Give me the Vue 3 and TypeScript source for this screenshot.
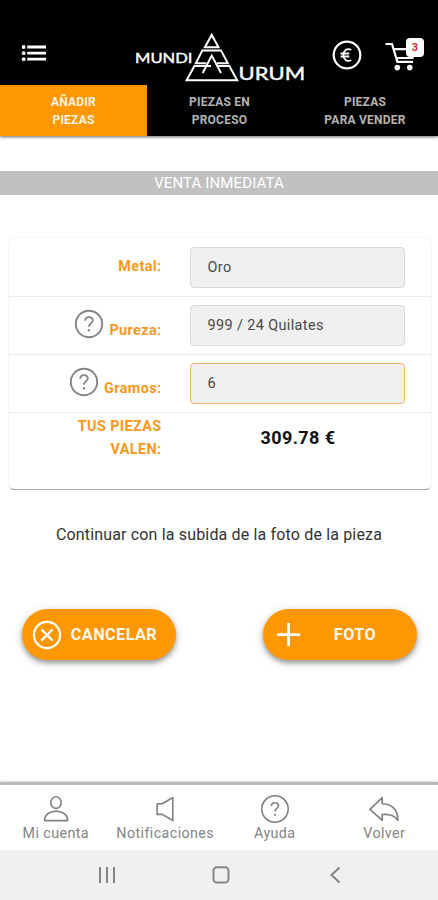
<script setup lang="ts">
import { ref } from 'vue'

interface Tab {
  id: string
  lines: string[]
}

interface Field {
  label: string
  value: string
  help: boolean
  focused: boolean
}

const tabs: Tab[] = [
  { id: 'add', lines: ['AÑADIR', 'PIEZAS'] },
  { id: 'process', lines: ['PIEZAS EN', 'PROCESO'] },
  { id: 'sell', lines: ['PIEZAS', 'PARA VENDER'] },
]
const activeTab = ref('add')

const fields: Field[] = [
  { label: 'Metal:', value: 'Oro', help: false, focused: false },
  { label: 'Pureza:', value: '999 / 24 Quilates', help: true, focused: false },
  { label: 'Gramos:', value: '6', help: true, focused: true },
]

const cartCount = ref(3)
</script>

<template>
  <div class="app">
    <header class="header">
      <svg class="menu" width="26" height="20" viewBox="0 0 26 20" fill="#fff">
        <circle cx="2.7" cy="3" r="1.9" /><circle cx="2.7" cy="9.2" r="1.9" /><circle cx="2.7" cy="15.2" r="1.9" />
        <path d="M6.2 1.6H25V4.4H6.2zM6.2 7.8H25V10.6H6.2zM6.2 13.8H25V16.6H6.2z" />
      </svg>
      <svg class="logo" width="172" height="52" viewBox="0 0 172 52">
        <g class="logo-text">
          <text x="0" y="32" font-size="13.8" textLength="57.5" lengthAdjust="spacingAndGlyphs">MUNDI</text>
          <text x="103.6" y="49.2" font-size="16.8" textLength="66.5" lengthAdjust="spacingAndGlyphs">URUM</text>
        </g>
        <g fill="none" stroke="#fff" stroke-width="2">
          <path d="M76.7 3.9L69.9 16.2H83.5z" />
          <path d="M71.5 32.2H60.8L67.4 19.4H86L92.8 32.2H82" />
          <path d="M71 35H59.4L51.6 49.2H102.2L94.3 35H82.5" />
          <path d="M67.7 42L76.7 24.6L86 42M71.5 35H76" />
        </g>
      </svg>
      <svg class="euro" width="30" height="30" viewBox="0 0 30 30" fill="none" stroke="#fff">
        <circle cx="15" cy="15" r="13.3" stroke-width="2.2" />
        <path d="M19.3 9.8C14.8 7.8 11.4 10.5 11.4 15S14.8 22.2 19.3 20.2M8.6 13.5H17.3M8.6 16.5H17.3" stroke-width="1.8" />
      </svg>
      <div class="cart">
        <svg width="34" height="31" viewBox="0 0 34 31" fill="none" stroke="#fff" stroke-width="2.2">
          <path d="M0.5 3H7L12.4 20.8H28M8.5 8.2H29L27.5 17H11.5" />
          <g fill="#fff" stroke="none"><circle cx="12.3" cy="26.6" r="2.8" /><circle cx="24.8" cy="26.6" r="2.8" /></g>
        </svg>
        <span class="badge">{{ cartCount }}</span>
      </div>
    </header>

    <nav class="tabs">
      <button
        v-for="tab in tabs"
        :key="tab.id"
        class="tab"
        :class="{ active: tab.id === activeTab }"
        @click="activeTab = tab.id"
      >
        <span v-for="line in tab.lines" :key="line">{{ line }}</span>
      </button>
    </nav>

    <main class="content">
      <h1 class="banner">VENTA INMEDIATA</h1>

      <section class="card">
        <div v-for="field in fields" :key="field.label" class="row">
          <div class="label" :class="{ 'with-help': field.help }">
            <svg v-if="field.help" width="30" height="30" viewBox="0 0 30 30" fill="none" stroke="#858585">
              <circle cx="15" cy="15" r="13.2" stroke-width="1.9" />
              <path d="M11.2 11.8C11.2 7 18.8 7.2 18.8 11.4C18.8 14.3 15 14 15 17.8" stroke-width="1.8" />
              <circle cx="15" cy="21.2" r="1.2" fill="#858585" stroke="none" />
            </svg>
            <span>{{ field.label }}</span>
          </div>
          <div class="input" :class="{ focused: field.focused }">{{ field.value }}</div>
        </div>
        <div class="total">
          <div class="total-label">TUS PIEZAS<br />VALEN:</div>
          <div class="total-value">309.78 €</div>
        </div>
      </section>

      <p class="hint">Continuar con la subida de la foto de la pieza</p>

      <div class="actions">
        <button class="action">
          <svg width="30" height="30" viewBox="0 0 30 30" fill="none" stroke="#fff">
            <circle cx="15" cy="15" r="13.1" stroke-width="2.2" />
            <path d="M9.4 9.4L20.6 20.6M20.6 9.4L9.4 20.6" stroke-width="2.2" />
          </svg>
          <span class="action-text">CANCELAR</span>
        </button>
        <button class="action">
          <svg width="30" height="30" viewBox="0 0 30 30" stroke="#fff" stroke-width="2.7">
            <path d="M4 14.7H27.2M15.6 3.1V26.3" />
          </svg>
          <span class="action-text">FOTO</span>
        </button>
      </div>
    </main>

    <footer class="bottom">
      <div class="item">
        <svg width="30" height="30" viewBox="0 0 30 30" fill="none" stroke="#808080" stroke-width="1.6">
          <ellipse cx="15" cy="8.6" rx="5.2" ry="5.8" />
          <path d="M3.6 26.6C3.6 14 26.6 14 26.6 26.6z" stroke-linejoin="round" />
        </svg>
        <span>Mi cuenta</span>
      </div>
      <div class="item">
        <svg width="30" height="30" viewBox="0 0 30 30" fill="none" stroke="#808080" stroke-width="1.6">
          <path d="M7.1 9.8H12.3L22.8 3.5V26.5L12.3 20.4H7.1z" stroke-linejoin="round" />
        </svg>
        <span>Notificaciones</span>
      </div>
      <div class="item">
        <svg width="30" height="30" viewBox="0 0 30 30" fill="none" stroke="#808080">
          <circle cx="15" cy="15" r="13.2" stroke-width="1.6" />
          <path d="M11.4 12C11.4 7.6 18.6 7.8 18.6 11.6C18.6 14.3 15 14 15 17.6" stroke-width="1.6" />
          <circle cx="15" cy="20.8" r="1.1" fill="#808080" stroke="none" />
        </svg>
        <span>Ayuda</span>
      </div>
      <div class="item">
        <svg width="30" height="30" viewBox="0 0 30 30" fill="none" stroke="#808080" stroke-width="1.6">
          <path d="M1 15.3L13.2 3.6V9.8C22.5 10 29.2 15.5 28.8 26.2C25.5 21.3 19.5 20 13.2 20.5V26.3z" stroke-linejoin="round" />
        </svg>
        <span>Volver</span>
      </div>
    </footer>

    <div class="system">
      <svg width="18" height="18" viewBox="0 0 18 18" stroke="#858585" stroke-width="2"><path d="M2 1V17M9 1V17M16 1V17" /></svg>
      <svg width="18" height="18" viewBox="0 0 18 18" fill="none" stroke="#858585" stroke-width="2"><rect x="1.5" y="1.2" width="15" height="15.4" rx="3.5" /></svg>
      <svg width="18" height="18" viewBox="0 0 18 18" fill="none" stroke="#858585" stroke-width="2"><path d="M13.5 1.5L5.5 9L13.5 16.5" /></svg>
    </div>
  </div>
</template>

<style>
body {
  background: #fff;
}
</style>

<style scoped>
.app {
  display: flex;
  flex-direction: column;
  width: 438px;
  height: 900px;
  overflow: hidden;
  background: #fff;
  font-family: Roboto, 'Liberation Sans', sans-serif;
  letter-spacing: 0.4px;
}
svg {
  display: block;
  flex: none;
}
button {
  border: 0;
  padding: 0;
  font: inherit;
  letter-spacing: inherit;
}
.header {
  display: flex;
  align-items: flex-start;
  box-sizing: border-box;
  height: 85px;
  flex: none;
  padding: 31px 0 0 21px;
  background: #000;
}
.menu {
  margin-top: 13px;
}
.logo {
  margin-left: 88px;
}
.logo-text {
  fill: #fff;
  stroke: #fff;
  stroke-width: 0.4;
  font-family: Lato, Roboto, sans-serif;
  font-weight: 400;
  letter-spacing: 0;
}
.euro {
  margin: 9px 0 0 25px;
}
.cart {
  position: relative;
  margin: 10px 0 0 23px;
}
.badge {
  position: absolute;
  top: -3px;
  left: 21px;
  width: 18px;
  height: 19px;
  border-radius: 4px;
  background: #fff;
  color: #e02525;
  font-size: 11px;
  font-weight: 700;
  line-height: 19px;
  text-align: center;
}
.tabs {
  display: grid;
  grid-template-columns: 147px 145px 146px;
  height: 51px;
  flex: none;
  background: #000;
  box-shadow: 0 1px 3px rgba(0, 0, 0, 0.6);
}
.tab {
  display: flex;
  flex-direction: column;
  align-items: center;
  padding-top: 9px;
  background: #000;
  color: #b3b3b3;
  font-size: 12px;
  font-weight: 700;
  letter-spacing: 0.22px;
  line-height: 17.5px;
}
.tab.active {
  background: #ff9800;
  color: #fff3df;
}
.content {
  flex: 1;
  padding-top: 35px;
}
.banner {
  height: 24px;
  margin: 0;
  background: #c1c1c1;
  color: #fff;
  font-size: 15px;
  font-weight: 400;
  letter-spacing: 0.12px;
  line-height: 25px;
  text-align: center;
}
.card {
  box-sizing: border-box;
  width: 422px;
  height: 251px;
  margin: 43px 0 0 9px;
  padding-top: 1px;
  border-radius: 5px;
  box-shadow: 0 2px 1px -1px rgba(0, 0, 0, 0.35), 0 0 2px rgba(0, 0, 0, 0.14);
}
.row {
  display: flex;
  box-sizing: border-box;
  height: 58px;
  padding-top: 8px;
  border-bottom: 1px solid #ececec;
}
.label {
  display: flex;
  justify-content: flex-end;
  align-items: flex-start;
  gap: 5px;
  width: 152.5px;
  margin-right: 28.5px;
  color: #f8981d;
  font-size: 14.4px;
  font-weight: 700;
  line-height: 18px;
}
.label span {
  margin-top: 11px;
}
.with-help svg {
  margin-top: 4px;
}
.with-help span {
  margin-top: 17px;
}
.input {
  box-sizing: border-box;
  width: 215px;
  height: 41px;
  padding-left: 16.5px;
  border: 1px solid #d9d9d9;
  border-radius: 4px;
  background: #f0f0f0;
  color: #484848;
  font-size: 14.4px;
  line-height: 39px;
}
.input.focused {
  border-color: #f5b565;
}
.total {
  display: flex;
}
.total-label {
  width: 152.5px;
  padding-top: 3px;
  color: #f8981d;
  font-size: 14.4px;
  font-weight: 700;
  line-height: 22.5px;
  text-align: right;
}
.total-value {
  width: 215px;
  margin-left: 29px;
  padding-top: 14px;
  color: #111;
  font-size: 18px;
  font-weight: 700;
  line-height: 22px;
  text-align: center;
}
.hint {
  margin: 35px 0 0;
  color: #333;
  font-size: 16px;
  letter-spacing: 0.16px;
  line-height: 22px;
  text-align: center;
}
.actions {
  display: flex;
  gap: 87px;
  padding: 63px 0 0 22px;
}
.action {
  display: flex;
  align-items: center;
  box-sizing: border-box;
  width: 154px;
  height: 51px;
  padding: 0 10px;
  border-radius: 26px;
  background: #ff9800;
  color: #fff9ef;
  font-size: 16.3px;
  font-weight: 700;
  box-shadow: 0 3px 5px rgba(0, 0, 0, 0.35), 0 2px 12px rgba(0, 0, 0, 0.12);
}
.action-text {
  flex: 1;
  text-align: center;
}
.bottom {
  display: grid;
  grid-template-columns: repeat(4, 109.5px);
  box-sizing: border-box;
  height: 68px;
  flex: none;
  padding-left: 1px;
  border-top: 3px solid #b9b9b9;
  box-shadow: 0 -1px 2px rgba(0, 0, 0, 0.15);
}
.item {
  display: flex;
  flex-direction: column;
  align-items: center;
  padding-top: 9px;
  color: #858585;
  font-size: 14.3px;
  line-height: 18px;
}
.system {
  display: flex;
  box-sizing: border-box;
  height: 50px;
  flex: none;
  gap: 96px;
  padding: 16px 0 0 98px;
  background: #f0f0f0;
}
</style>
